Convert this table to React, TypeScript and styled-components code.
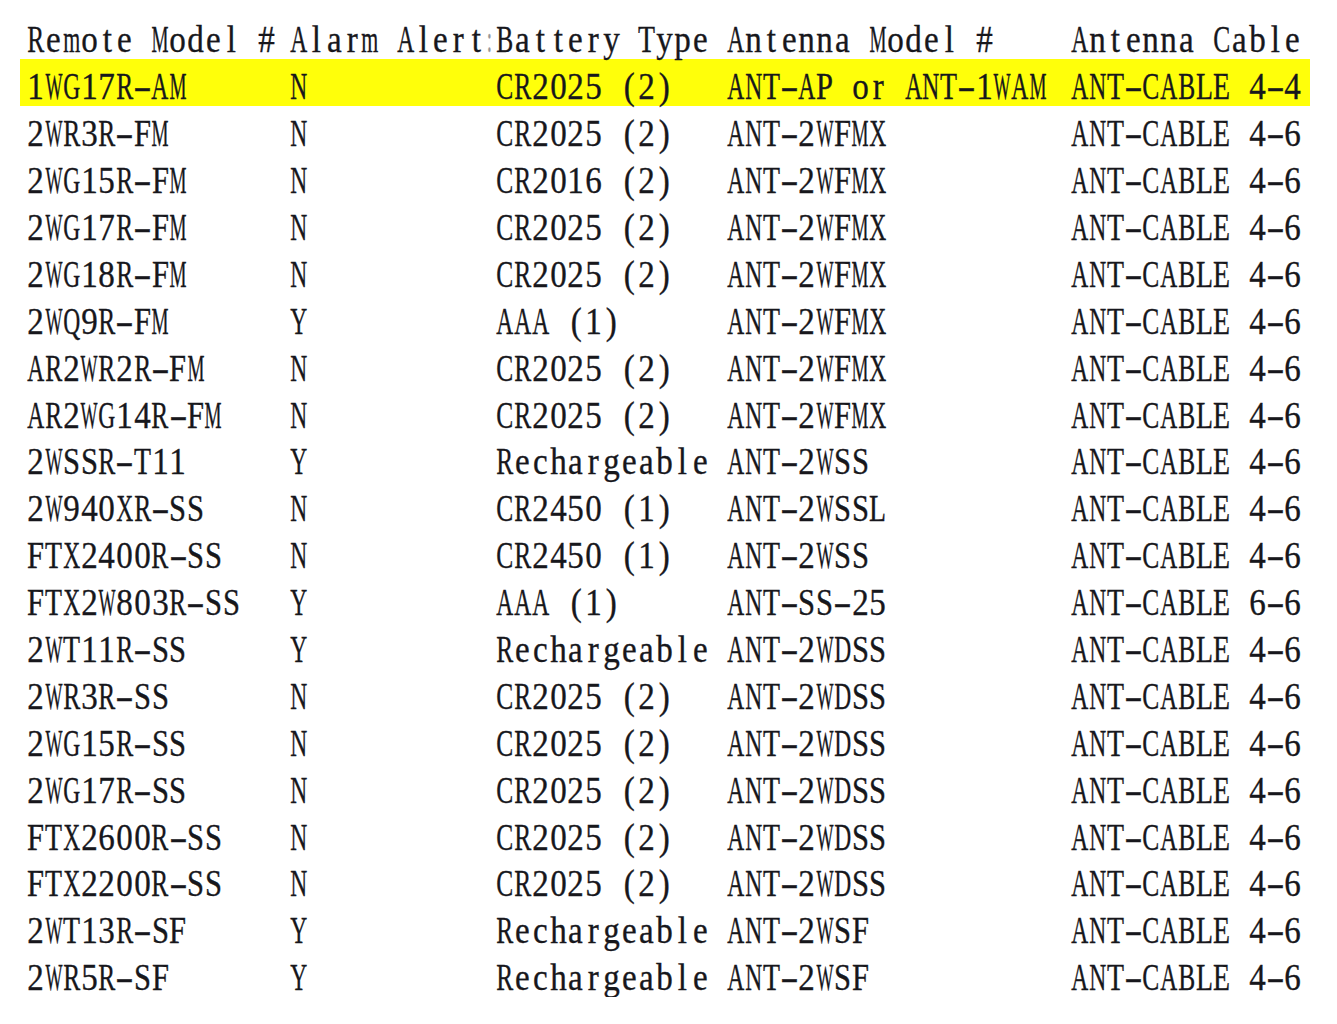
import React from "react";
import styled, { createGlobalStyle } from "styled-components";

const GlobalStyle = createGlobalStyle`
  html, body { margin: 0; padding: 0; background: #ffffff; }
  body { font-family: "Liberation Serif", "Times New Roman", serif; }
`;

const FONT_SIZE = 38;
const CELL = 17.75;

// Times / Liberation Serif advance widths (em) used to condense each glyph into a half-width cell
const W: Record<string, number> = {
  " ": 0.25, "#": 0.5, "(": 0.333, ")": 0.333, "-": 0.333, ":": 0.278, "?": 0.444,
  "0": 0.5, "1": 0.5, "2": 0.5, "3": 0.5, "4": 0.5, "5": 0.5, "6": 0.5, "7": 0.5, "8": 0.5, "9": 0.5,
  A: 0.722, B: 0.667, C: 0.667, D: 0.722, E: 0.611, F: 0.556, G: 0.722, H: 0.722, I: 0.333,
  J: 0.389, K: 0.722, L: 0.611, M: 0.889, N: 0.722, O: 0.722, P: 0.556, Q: 0.722, R: 0.667,
  S: 0.556, T: 0.611, U: 0.722, V: 0.722, W: 0.944, X: 0.722, Y: 0.722, Z: 0.611,
  a: 0.444, b: 0.5, c: 0.444, d: 0.5, e: 0.444, f: 0.333, g: 0.5, h: 0.5, i: 0.278, j: 0.278,
  k: 0.5, l: 0.278, m: 0.778, n: 0.5, o: 0.5, p: 0.5, q: 0.5, r: 0.333, s: 0.389, t: 0.278,
  u: 0.5, v: 0.5, w: 0.722, x: 0.5, y: 0.5, z: 0.444,
};

const scaleFor = (ch: string) => {
  if (ch === "-") return 1.45;
  const w = W[ch] ?? 0.5;
  return Math.min(0.87, 17 / (w * FONT_SIZE));
};

const Page = styled.div`
  padding: 12.4px 0 0 20px;
  width: 1290px;
`;

const Row = styled.div<{ $highlight?: boolean }>`
  display: grid;
  grid-template-columns: 263px 206px 231px 344px 1fr;
  height: 46.9px;
  padding-left: 7px;
  background: ${(p) => (p.$highlight ? "#ffff0a" : "transparent")};
`;

const Cell = styled.div`
  font-size: ${FONT_SIZE}px;
  line-height: 39px;
  padding-top: 8px;
  color: #17171c;
  -webkit-text-stroke: 0.35px #17171c;
  white-space: pre;
`;

const Glyph = styled.span<{ $w?: number; $faint?: boolean }>`
  display: inline-flex;
  justify-content: center;
  width: ${(p) => p.$w ?? CELL}px;
  white-space: pre;
  opacity: ${(p) => (p.$faint ? 0.45 : 1)};
`;

const Ink = styled.span.attrs<{ $sx: number }>((p) => ({
  style: { transform: `scaleX(${p.$sx})` },
}))<{ $sx: number }>`
  display: inline-block;
  transform-origin: center;
  white-space: pre;
`;

const Text: React.FC<{ value: string; tail?: string }> = ({ value, tail }) => (
  <>
    {Array.from(value).map((ch, i) => (
      <Glyph key={i}>
        <Ink $sx={scaleFor(ch)}>{ch}</Ink>
      </Glyph>
    ))}
    {tail ? (
      <Glyph $w={8} $faint>
        <Ink $sx={0.5}>{tail}</Ink>
      </Glyph>
    ) : null}
  </>
);

const header = ["Remote Model #", "Alarm Alert", "Battery Type", "Antenna Model #", "Antenna Cable"];

const rows: string[][] = [
  ["1WG17R-AM", "N", "CR2025 (2)", "ANT-AP or ANT-1WAM", "ANT-CABLE 4-4"],
  ["2WR3R-FM", "N", "CR2025 (2)", "ANT-2WFMX", "ANT-CABLE 4-6"],
  ["2WG15R-FM", "N", "CR2016 (2)", "ANT-2WFMX", "ANT-CABLE 4-6"],
  ["2WG17R-FM", "N", "CR2025 (2)", "ANT-2WFMX", "ANT-CABLE 4-6"],
  ["2WG18R-FM", "N", "CR2025 (2)", "ANT-2WFMX", "ANT-CABLE 4-6"],
  ["2WQ9R-FM", "Y", "AAA (1)", "ANT-2WFMX", "ANT-CABLE 4-6"],
  ["AR2WR2R-FM", "N", "CR2025 (2)", "ANT-2WFMX", "ANT-CABLE 4-6"],
  ["AR2WG14R-FM", "N", "CR2025 (2)", "ANT-2WFMX", "ANT-CABLE 4-6"],
  ["2WSSR-T11", "Y", "Rechargeable", "ANT-2WSS", "ANT-CABLE 4-6"],
  ["2W940XR-SS", "N", "CR2450 (1)", "ANT-2WSSL", "ANT-CABLE 4-6"],
  ["FTX2400R-SS", "N", "CR2450 (1)", "ANT-2WSS", "ANT-CABLE 4-6"],
  ["FTX2W803R-SS", "Y", "AAA (1)", "ANT-SS-25", "ANT-CABLE 6-6"],
  ["2WT11R-SS", "Y", "Rechargeable", "ANT-2WDSS", "ANT-CABLE 4-6"],
  ["2WR3R-SS", "N", "CR2025 (2)", "ANT-2WDSS", "ANT-CABLE 4-6"],
  ["2WG15R-SS", "N", "CR2025 (2)", "ANT-2WDSS", "ANT-CABLE 4-6"],
  ["2WG17R-SS", "N", "CR2025 (2)", "ANT-2WDSS", "ANT-CABLE 4-6"],
  ["FTX2600R-SS", "N", "CR2025 (2)", "ANT-2WDSS", "ANT-CABLE 4-6"],
  ["FTX2200R-SS", "N", "CR2025 (2)", "ANT-2WDSS", "ANT-CABLE 4-6"],
  ["2WT13R-SF", "Y", "Rechargeable", "ANT-2WSF", "ANT-CABLE 4-6"],
  ["2WR5R-SF", "Y", "Rechargeable", "ANT-2WSF", "ANT-CABLE 4-6"],
];

export default function App() {
  return (
    <>
      <GlobalStyle />
      <Page>
        <Row>
          {header.map((h, i) => (
            <Cell key={i}>
              <Text value={h} tail={i === 1 ? ":" : undefined} />
            </Cell>
          ))}
        </Row>
        {rows.map((r, ri) => (
          <Row key={ri} $highlight={ri === 0}>
            {r.map((c, ci) => (
              <Cell key={ci}>
                <Text value={c} />
              </Cell>
            ))}
          </Row>
        ))}
      </Page>
    </>
  );
}
